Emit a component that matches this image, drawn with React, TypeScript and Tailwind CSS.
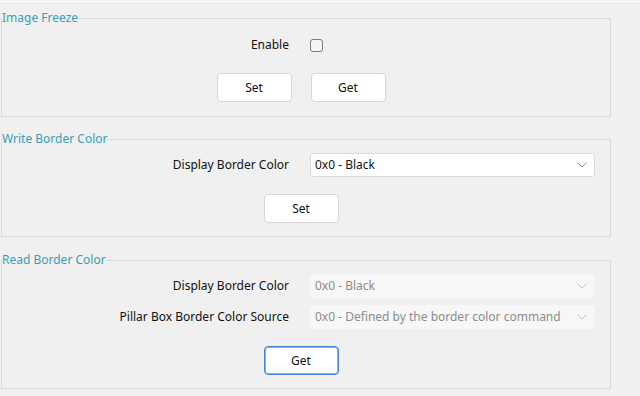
import React from 'react'

const font = { fontFamily: '"Segoe UI", "Noto Sans", "Liberation Sans", sans-serif' }

const Chevron = ({ disabled }: { disabled?: boolean }) => (
  <svg width="10" height="6" viewBox="0 0 10 6" fill="none">
    <path d="M0.5 0.5 L5 5 L9.5 0.5" stroke={disabled ? '#c4c4c4' : '#8a8a8a'} strokeWidth="1" />
  </svg>
)

const Combo = ({ value, disabled }: { value: string; disabled?: boolean }) => (
  <div
    className={
      disabled
        ? 'flex items-center justify-between w-[285px] h-[24px] pl-[4px] pr-[7px] rounded-[3px] border border-[#f7f7f7] bg-[#f7f7f7] text-[#8c8c8c]'
        : 'flex items-center justify-between w-[285px] h-[24px] pl-[4px] pr-[7px] rounded-[3px] border border-[#dadada] bg-white text-[#111]'
    }>
    <span>{value}</span>
    <Chevron disabled={disabled} />
  </div>
)

const Button = ({ label, focused }: { label: string; focused?: boolean }) => (
  <button
    className={
      focused
        ? 'w-[75px] h-[29px] rounded-[4px] bg-white border border-[#3f87d6] shadow-[inset_0_0_0_1px_#7fb0e6] text-[#111]'
        : 'w-[75px] h-[29px] rounded-[4px] bg-white border border-[#d6d6d6] text-[#111]'
    }>
    {label}
  </button>
)

const Row = ({ label, children }: { label: string; children: React.ReactNode }) => (
  <div className="flex items-center">
    <div className="w-[287px] text-right text-[#111]">{label}</div>
    <div className="ml-[21px]">{children}</div>
  </div>
)

const Group = ({ title, children, className }: { title: string; children: React.ReactNode; className?: string }) => (
  <fieldset className={'ml-px w-[610px] border border-[#dadada] ' + (className ?? '')}>
    <legend className="text-[#3a9fb4] leading-[16px]">{title}</legend>
    {children}
  </fieldset>
)

const App = () => {
  return (
    <div className="w-[640px] h-[396px] bg-[#f0f0f0] text-[12px] leading-[16px] overflow-hidden" style={font}>
      <div className="mt-px h-px bg-white" />
      <Group title="Image Freeze" className="mt-[8px] pt-[11px] pb-[14px]">
        <Row label="Enable">
          <div className="w-[13px] h-[13px] rounded-[3px] border border-[#7a7a7a] bg-[#f5f5f5]" />
        </Row>
        <div className="flex justify-center gap-[19px] pr-[10px] mt-[20px]">
          <Button label="Set" />
          <Button label="Get" />
        </div>
      </Group>

      <Group title="Write Border Color" className="mt-[14px] pt-[6px] pb-[13px]">
        <Row label="Display Border Color">
          <Combo value="0x0 - Black" />
        </Row>
        <div className="flex justify-center pr-[10px] mt-[17px]">
          <Button label="Set" />
        </div>
      </Group>

      <Group title="Read Border Color" className="mt-[15px] pt-[6px] pb-[13px]">
        <Row label="Display Border Color">
          <Combo value="0x0 - Black" disabled />
        </Row>
        <div className="mt-[7px]">
          <Row label="Pillar Box Border Color Source">
            <Combo value="0x0 - Defined by the border color command" disabled />
          </Row>
        </div>
        <div className="flex justify-center pr-[10px] mt-[17px]">
          <Button label="Get" focused />
        </div>
      </Group>
    </div>
  )
}

export default App
